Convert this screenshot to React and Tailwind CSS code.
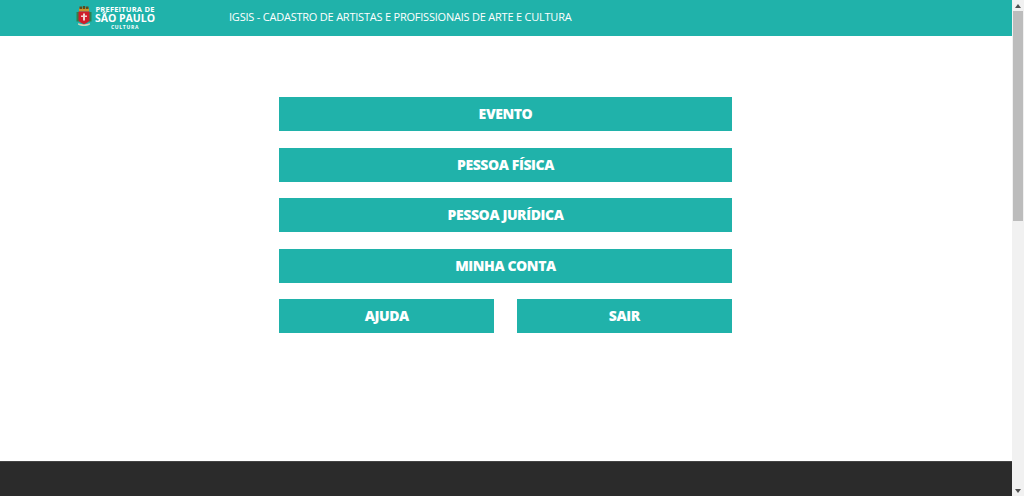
const font = { fontFamily: '"Open Sans", sans-serif' };

function Crest() {
  return (
    <svg width="16" height="20" viewBox="0 0 16 20" className="mt-px shrink-0">
      {/* crown */}
      <path d="M3 2h10v3.500h-10z" fill="#c9962e" />
      <path d="M3.500 0.500h2.500v2.500h-2.500zM6.800 0h2.400v3h-2.400zM10 0.500h2.500v2.500h-2.500z" fill="#5e4a1c" />
      {/* green side ornaments */}
      <path d="M0.500 6h2.800v9.500h-2.800zM12.700 6h2.800v9.500h-2.800z" fill="#2f7f4c" />
      {/* shield */}
      <path d="M2.500 5.500h11v8.500c0 1.800-2.700 2.800-5.500 4.200c-2.800-1.400-5.500-2.400-5.500-4.200z" fill="#cf1d2a" />
      <path d="M7 7.500h2v2h2v1.600h-2v3.400h-2v-3.400h-2v-1.600h2z" fill="#f2d3cf" />
      {/* ribbon */}
      <path d="M2.500 17c1.700 1 3.500 1.400 5.500 1.400s3.800-.4 5.500-1.400l.6 1.500c-1.800 1-4 1.500-6.100 1.500s-4.300-.5-6.100-1.500z" fill="#d9d3b8" />
    </svg>
  );
}

function MenuButton({ label, className = '' }) {
  return (
    <a
      href="#"
      className={`flex h-[34px] items-center justify-center bg-[#20b2aa] pb-px text-[14px] font-extrabold tracking-[-0.4px] text-white ${className}`}
    >
      {label}
    </a>
  );
}

function Scrollbar() {
  return (
    <div className="flex h-full w-3 shrink-0 flex-col items-center bg-[#f1f1f1]">
      <div className="flex h-[11px] w-full shrink-0 items-center justify-center">
        <div className="h-0 w-0 border-x-[3.5px] border-b-[4px] border-x-transparent border-b-[#505050]" />
      </div>
      <div className="h-[210px] w-[10px] shrink-0 bg-[#bcbcbc]" />
      <div className="flex-1" />
      <div className="flex h-[11px] w-full shrink-0 items-center justify-center">
        <div className="h-0 w-0 border-x-[3.5px] border-t-[4px] border-x-transparent border-t-[#505050]" />
      </div>
    </div>
  );
}

export default function App() {
  return (
    <div className="flex h-[496px] w-[1024px] overflow-hidden bg-white" style={font}>
      <div className="flex min-w-0 flex-1 flex-col">
        {/* Header */}
        <header className="flex h-9 shrink-0 items-center bg-[#20b2aa] pl-[76px] text-white">
          <div className="flex h-full w-[153px] items-start gap-[3px] pt-[5px]">
            <Crest />
            <div className="flex w-[60px] flex-col items-center font-bold leading-none">
              <span className="whitespace-nowrap text-[7.5px] leading-[9px] tracking-[0.2px]">PREFEITURA DE</span>
              <span className="whitespace-nowrap text-[10.5px] leading-[9px]">SÃO PAULO</span>
              <span className="whitespace-nowrap text-[5px] leading-[9px] tracking-[0.7px]">CULTURA</span>
            </div>
          </div>
          <span className="pb-px text-[11px] font-medium tracking-[-0.22px]">
            IGSIS - CADASTRO DE ARTISTAS E PROFISSIONAIS DE ARTE E CULTURA
          </span>
        </header>

        {/* Menu */}
        <main className="flex flex-1 justify-center pr-[1px] pt-[61px]">
          <div className="flex w-[452.4px] flex-col gap-[16.5px]">
            <MenuButton label="EVENTO" />
            <MenuButton label="PESSOA FÍSICA" />
            <MenuButton label="PESSOA JURÍDICA" />
            <MenuButton label="MINHA CONTA" />
            <div className="flex gap-[22.6px]">
              <MenuButton label="AJUDA" className="flex-1" />
              <MenuButton label="SAIR" className="flex-1" />
            </div>
          </div>
        </main>

        {/* Footer */}
        <footer className="h-[35px] shrink-0 border-t border-t-[#444444] bg-[#2b2b2b]" />
      </div>
      <Scrollbar />
    </div>
  );
}
